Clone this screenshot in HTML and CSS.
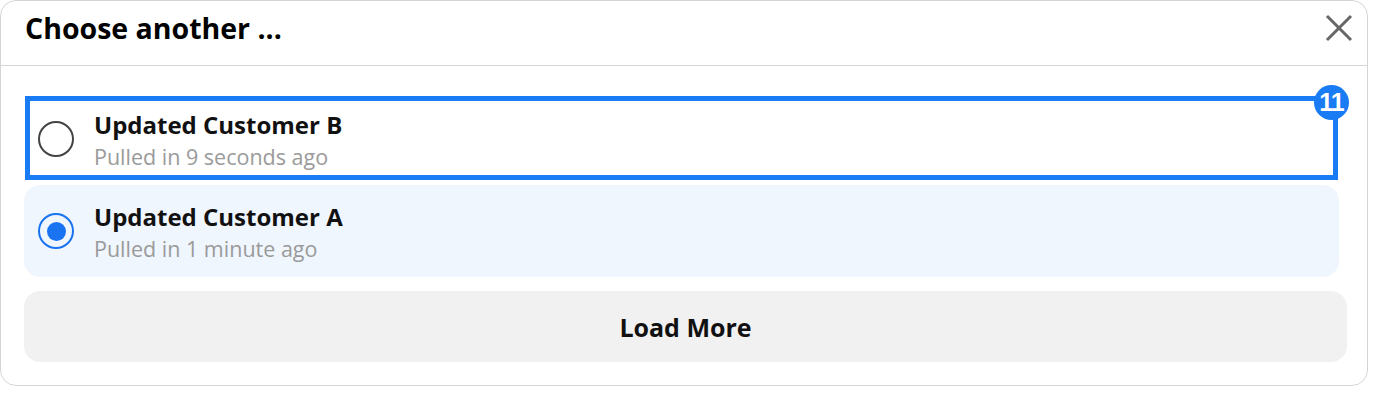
FILE: index.html
```html
<!DOCTYPE html>
<html lang="en">
<head>
<meta charset="utf-8">
<title>Choose another</title>
<link rel="stylesheet" href="styles.css">
</head>
<body>
  <section class="panel">
    <header class="panel-header">
      <h2 class="panel-title">Choose another ...</h2>
      <button class="close-btn" aria-label="Close">
        <svg width="28" height="28" viewBox="0 0 28 28" aria-hidden="true">
          <path d="M2 2 L26 26 M26 2 L2 26" stroke="#666" stroke-width="3" fill="none"/>
        </svg>
      </button>
    </header>
    <div class="panel-body">
      <ul class="option-list">
        <li class="option">
          <span class="radio"></span>
          <div class="option-text">
            <div class="option-title">Updated Customer B</div>
            <div class="option-sub">Pulled in 9 seconds ago</div>
          </div>
          <span class="focus-ring"></span>
          <span class="focus-badge">11</span>
        </li>
        <li class="option selected">
          <span class="radio checked"></span>
          <div class="option-text">
            <div class="option-title">Updated Customer A</div>
            <div class="option-sub">Pulled in 1 minute ago</div>
          </div>
        </li>
      </ul>
      <button class="load-more">Load More</button>
    </div>
  </section>
</body>
</html>
```
FILE: styles.css
```css
* { box-sizing: border-box; }

html, body {
  margin: 0;
  padding: 0;
  background: #fff;
  font-family: "Open Sans", "Noto Sans", sans-serif;
  color: #111;
}

.panel {
  width: 1368px;
  height: 386px;
  border: 1px solid #d5d5d5;
  border-radius: 16px;
  background: #fff;
  display: flex;
  flex-direction: column;
}

.panel-header {
  height: 65px;
  flex: none;
  border-bottom: 1px solid #d5d5d5;
  display: flex;
  align-items: center;
  justify-content: space-between;
  padding: 0 14px 10px 24px;
}

.panel-title {
  margin: 0;
  font-size: 28.5px;
  font-weight: 700;
  color: #000;
  line-height: 36px;
}

.close-btn {
  border: 0;
  background: none;
  padding: 0;
  width: 28px;
  height: 28px;
  display: flex;
  cursor: pointer;
}

.panel-body {
  padding: 27px 20px 22px 23px;
  display: flex;
  flex-direction: column;
}

.option-list {
  list-style: none;
  margin: 0 8px 0 0;
  padding: 0;
}

.option {
  position: relative;
  height: 92px;
  display: flex;
  align-items: center;
  gap: 20px;
  padding-left: 14px;
  border-radius: 16px;
}

.option.selected {
  background: #f0f6fe;
}

.radio {
  flex: none;
  width: 36px;
  height: 36px;
  border-radius: 50%;
  border: 2px solid #444;
  display: flex;
  align-items: center;
  justify-content: center;
}

.radio.checked {
  border-color: #1a73f0;
}

.radio.checked::after {
  content: "";
  width: 19px;
  height: 19px;
  border-radius: 50%;
  background: #1a73f0;
}

.option-text {
  display: flex;
  flex-direction: column;
  padding-top: 4px;
}

.option-title {
  font-size: 24px;
  font-weight: 700;
  line-height: 32px;
  color: #111;
}

.option-sub {
  font-size: 21.5px;
  line-height: 32px;
  color: #9a9a9a;
}

.focus-ring {
  position: absolute;
  top: 3px;
  left: 1px;
  right: 1px;
  bottom: 5px;
  border: 5px solid #1a7cf5;
  pointer-events: none;
}

.focus-badge {
  position: absolute;
  top: -8px;
  right: -10px;
  width: 35px;
  height: 35px;
  border-radius: 50%;
  background: #1a7cf5;
  color: #fff;
  font-family: "Liberation Sans", Arial, sans-serif;
  font-weight: 700;
  font-size: 25px;
  letter-spacing: -1px;
  display: flex;
  align-items: center;
  justify-content: center;
}

.load-more {
  margin-top: 14px;
  height: 71px;
  width: 100%;
  border: 0;
  border-radius: 16px;
  background: #f1f1f1;
  font-family: "Open Sans", "Noto Sans", sans-serif;
  font-size: 25px;
  font-weight: 700;
  color: #111;
  cursor: pointer;
}
```
